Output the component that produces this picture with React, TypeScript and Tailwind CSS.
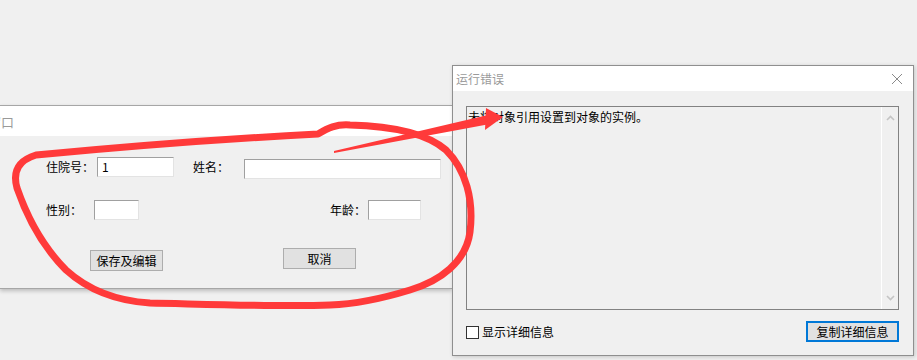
import React from "react";

const font = { fontFamily: '"Noto Sans CJK SC", "Microsoft YaHei", sans-serif' };

function Input({ className, children }: { className: string; children?: React.ReactNode }) {
  return (
    <div
      className={`h-[20px] bg-white border border-t-[#a0a0a0] border-l-[#a0a0a0] border-b-[#e3e3e3] border-r-[#e3e3e3] flex items-center pl-[4px] text-[12px] text-black ${className}`}
    >
      {children}
    </div>
  );
}

function Btn({ className, children }: { className: string; children: React.ReactNode }) {
  return (
    <div
      className={`h-[21px] bg-[#e1e1e1] border border-[#adadad] flex items-center justify-center text-[12px] text-black ${className}`}
    >
      {children}
    </div>
  );
}

export default function App() {
  return (
    <div className="relative w-[917px] h-[360px] bg-[#f0f0f0] overflow-hidden" style={font}>
      {/* Left window */}
      <div className="absolute left-0 top-[105px] w-[452px] h-[184px] border-t border-b border-[#a6a6a6] flex flex-col shadow-[0_2px_4px_rgba(0,0,0,0.22)]">
        <div className="h-[30px] bg-white flex items-center overflow-hidden shrink-0">
          <span className="ml-[-12px] text-[13px] text-[#9a9a9a] leading-none">窗口</span>
        </div>
        <div className="flex-1 bg-[#f0f0f0] pt-[21px] pl-[46px] text-[12px] text-black">
          <div className="flex items-start">
            <span className="w-[51px] leading-[20px]">住院号：</span>
            <Input className="w-[77px]">1</Input>
            <span className="ml-[19px] w-[51px] leading-[20px]">姓名：</span>
            <Input className="w-[197px] mt-[2px]" />
          </div>
          <div className="flex items-start mt-[21px]">
            <span className="w-[48px] leading-[20px]">性别：</span>
            <Input className="w-[45px]" />
            <span className="ml-[191px] w-[38px] leading-[20px]">年龄：</span>
            <Input className="w-[53px]" />
          </div>
          <div className="flex items-start mt-[28px]">
            <Btn className="ml-[44px] mt-[2px] w-[73px]">保存及编辑</Btn>
            <Btn className="ml-[120px] w-[73px]">取消</Btn>
          </div>
        </div>
      </div>

      {/* Error dialog */}
      <div className="absolute left-[452px] top-[65px] w-[462px] h-[291px] border border-[#8f8f8f] bg-[#f0f0f0] flex flex-col shadow-[1px_1px_4px_rgba(0,0,0,0.18)]">
        <div className="h-[25px] bg-white flex items-center justify-between shrink-0">
          <span className="ml-[3px] text-[12px] text-[#9a9a9a] leading-none">运行错误</span>
          <svg width="12" height="12" viewBox="0 0 12 12" className="mr-[10px]">
            <path d="M1 1 L11 11 M11 1 L1 11" stroke="#8a8a8a" strokeWidth="1" fill="none" />
          </svg>
        </div>
        <div className="ml-[13px] mt-[15px] w-[433px] h-[204px] border border-[#828282] bg-[#f0f0f0] flex">
          <div className="flex-1 pl-[1px] pt-[2px] text-[12px] text-black leading-[16px]">
            未将对象引用设置到对象的实例。
          </div>
          <div className="w-[17px] border-l border-white flex flex-col justify-between items-center py-[8px]">
            <svg width="9" height="6" viewBox="0 0 9 6">
              <path d="M1 5 L4.5 1.5 L8 5" stroke="#c4c4c4" strokeWidth="1.6" fill="none" />
            </svg>
            <svg width="9" height="6" viewBox="0 0 9 6">
              <path d="M1 1 L4.5 4.5 L8 1" stroke="#c4c4c4" strokeWidth="1.6" fill="none" />
            </svg>
          </div>
        </div>
        <div className="mt-[11px] ml-[13px] mr-[14px] flex items-center justify-between">
          <div className="flex items-center mt-[1px]">
            <div className="w-[13px] h-[13px] border border-[#333333] bg-white" />
            <span className="ml-[3px] text-[12px] text-black leading-none">显示详细信息</span>
          </div>
          <div className="w-[93px] h-[21px] border-2 border-[#0078d7] bg-[#e1e1e1] flex items-center justify-center text-[12px] text-black">
            复制详细信息
          </div>
        </div>
      </div>

      {/* Red annotation */}
      <svg className="absolute left-0 top-0 pointer-events-none" width="917" height="360" viewBox="0 0 917 360">
        <path
          d="M318 134 C328 128 336 124 350 125 C390 126 425 132 446 150 C466 170 474 200 470 232 C466 262 440 281 410 290 C384 298 358 304 330 305 C280 307 200 304 150 303 C118 301 88 290 66 270 C42 246 26 214 17 188 C12 170 20 160 36 155 C120 147 220 139 318 134 Z"
          fill="none"
          stroke="#ff3a3a"
          strokeWidth="7"
          strokeLinejoin="round"
          strokeLinecap="round"
        />
        <polygon points="334,151 488,115 490,124 334,153" fill="#ff3a3a" />
        <polygon points="486,108 503,117 485,130" fill="#ff3a3a" />
      </svg>
    </div>
  );
}
